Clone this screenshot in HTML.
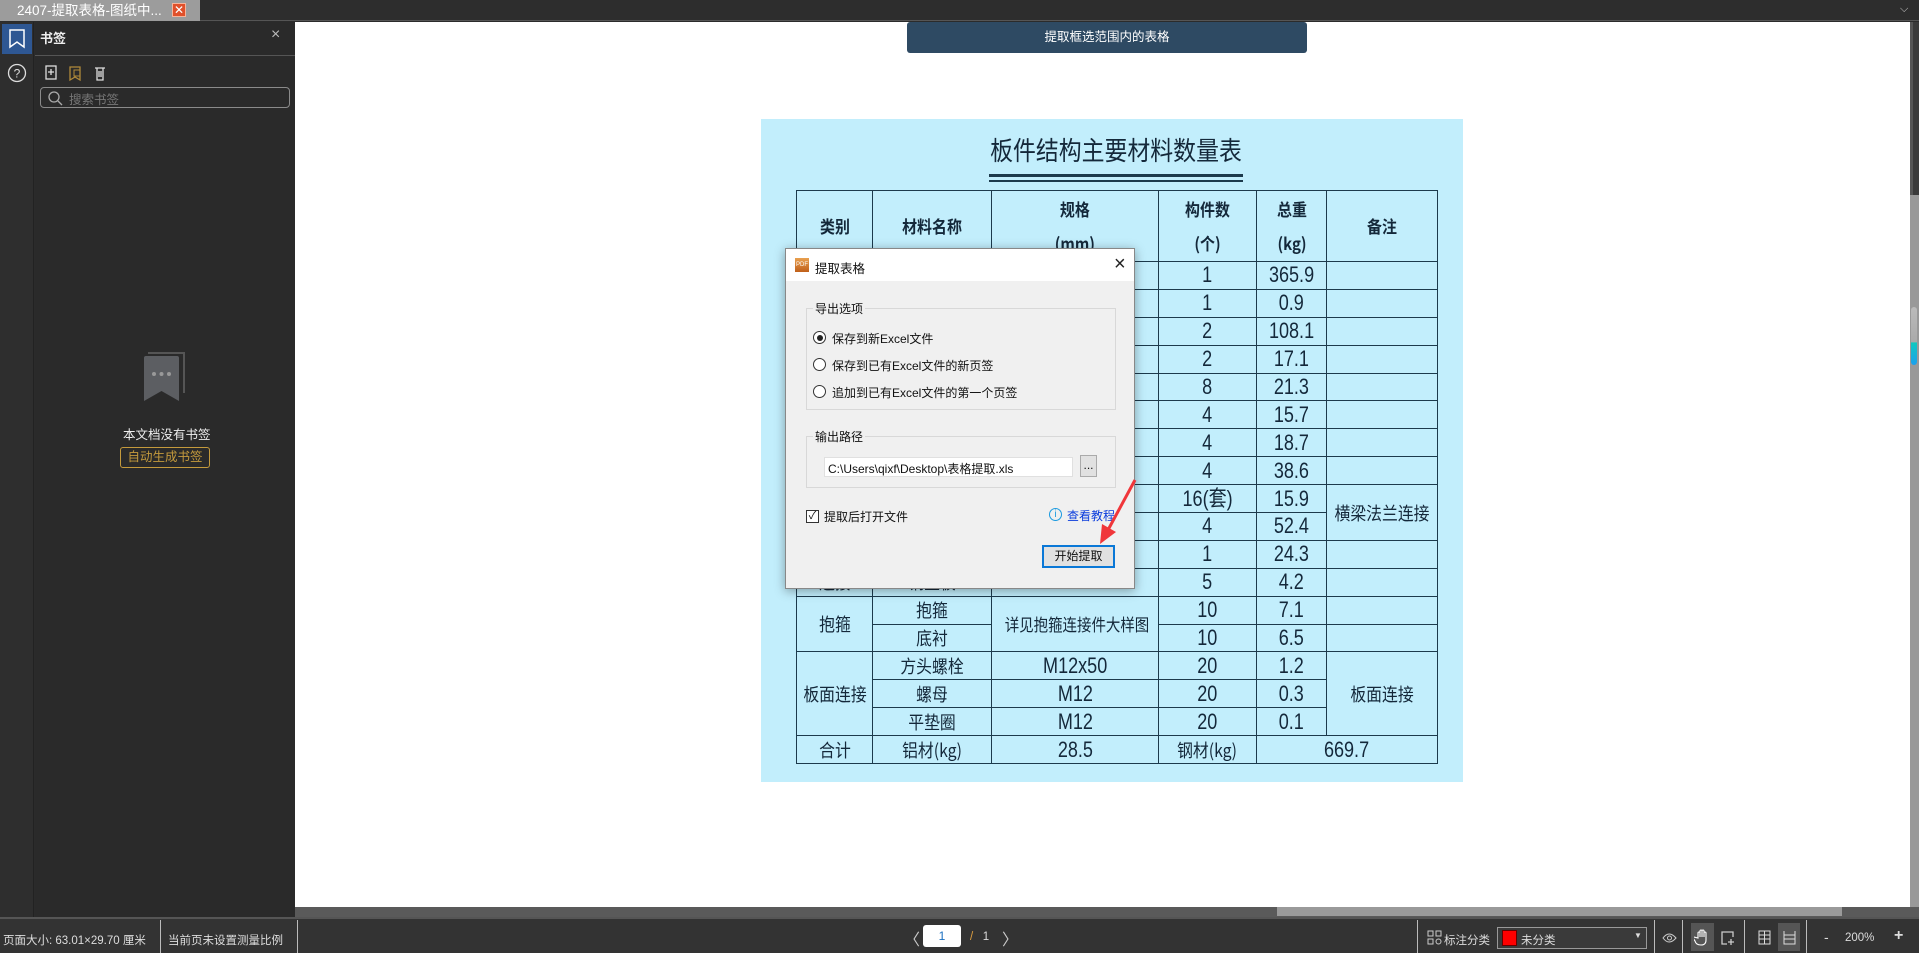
<!DOCTYPE html>
<html><head><meta charset="utf-8"><style>
*{margin:0;padding:0;box-sizing:border-box}
body{width:1919px;height:953px;overflow:hidden;background:#2b2b2b;font-family:"Liberation Sans","Noto Sans CJK SC",sans-serif;position:relative}
.a{position:absolute}
#tbl{position:absolute;left:796px;top:190px;width:641px;border-collapse:collapse;table-layout:fixed;font-family:"Noto Sans CJK SC",sans-serif;color:#14283a}
#tbl td{border:1.6px solid #1c3a4c;text-align:center;vertical-align:middle;height:27.9px;padding:0;font-size:18px;line-height:20px;overflow:hidden;white-space:nowrap}
#tbl td span{display:inline-block;transform:scaleX(.88)}
#tbl td.n{font-family:"Liberation Sans Narrow","Liberation Sans",sans-serif;font-size:22px}
#tbl td.n span{transform:scaleX(.82)}
#tbl tr.h td{height:71px;font-size:17px;font-weight:bold;line-height:34px}
.dlg{font-family:"Liberation Sans","Noto Sans CJK SC",sans-serif;font-size:12px;color:#111}
.st{color:#ddd;font-size:11.5px;top:932px;font-family:"Liberation Sans","Noto Sans CJK SC",sans-serif}
.sep{top:920px;width:1px;height:33px;background:#bbb}
.radio{width:13px;height:13px;border:1px solid #333;border-radius:50%;background:#fff}
</style></head><body>
<div class="a" style="left:0;top:0;width:1919px;height:21px;background:#2d2d2d;border-bottom:1px solid #555"></div>
<div class="a" style="left:0;top:0;width:200px;height:21px;background:#9c9c9c;color:#fff;font-size:13.5px;line-height:21px;padding-left:17px">2407-提取表格-图纸中...</div>
<div class="a" style="left:172px;top:3px;width:14px;height:14px;background:#e0502a;border:1px solid #f7b49a;color:#fff;font-size:12px;line-height:12px;text-align:center">✕</div>
<div class="a" style="left:1900px;top:3px;color:#ccc;font-size:11px">⌵</div>
<div class="a" style="left:0;top:22px;width:34px;height:895px;background:#2e2e2e;border-right:1px solid #222"></div>
<div class="a" style="left:2px;top:24px;width:30px;height:30px;background:#2e5793"></div>
<svg class="a" style="left:8px;top:29px" width="18" height="20"><path d="M2 1h14v17l-7-5-7 5z" fill="none" stroke="#fff" stroke-width="1.5"/></svg>
<svg class="a" style="left:7px;top:63px" width="20" height="20"><circle cx="10" cy="10" r="8.5" fill="none" stroke="#ddd" stroke-width="1.3"/><text x="10" y="14.5" font-size="12" fill="#ddd" text-anchor="middle" font-family="Liberation Sans">?</text></svg>
<div class="a" style="left:35px;top:22px;width:260px;height:895px;background:#2a2a2a"></div>
<div class="a" style="left:40px;top:28px;color:#eee;font-size:13px;font-weight:bold">书签</div>
<div class="a" style="left:271px;top:26px;color:#bbb;font-size:16px">×</div>
<div class="a" style="left:35px;top:55px;width:260px;height:1px;background:#555"></div>
<svg class="a" style="left:44px;top:64px" width="70" height="18"><rect x="2" y="2" width="10" height="13" fill="none" stroke="#ddd" stroke-width="1.3"/><path d="M7 5v6M4 8h6" stroke="#ddd" stroke-width="1.3"/><path d="M26 3h10v13l-5-3-5 3z" fill="none" stroke="#b08a3a" stroke-width="1.3"/><rect x="30" y="6" width="6" height="6" fill="none" stroke="#b08a3a"/><path d="M51 4h10M53 4v12h6v-12M55 7v6M57 7v6" fill="none" stroke="#ddd" stroke-width="1.3"/></svg>
<div class="a" style="left:40px;top:87px;width:250px;height:21px;border:1px solid #8a8a8a;border-radius:4px"></div>
<svg class="a" style="left:47px;top:90px" width="16" height="16"><circle cx="7" cy="7" r="5" fill="none" stroke="#aaa" stroke-width="1.3"/><path d="M11 11l4 4" stroke="#aaa" stroke-width="1.3"/></svg>
<div class="a" style="left:69px;top:89px;color:#777;font-size:12.5px">搜索书签</div>
<svg class="a" style="left:142px;top:352px" width="45" height="50"><path d="M6 1h36v40" fill="none" stroke="#555" stroke-width="2"/><path d="M2 6q0-2 2-2h31q2 0 2 2v43l-17.5-10-17.5 10z" fill="#5c5e62"/><circle cx="12" cy="22" r="2" fill="#999"/><circle cx="19.5" cy="22" r="2" fill="#999"/><circle cx="27" cy="22" r="2" fill="#999"/></svg>
<div class="a" style="left:123px;top:424px;color:#eee;font-size:12.5px">本文档没有书签</div>
<div class="a" style="left:120px;top:447px;width:90px;height:21px;border:1px solid #c49a3c;border-radius:3px;color:#c49a3c;font-size:12.5px;text-align:center;line-height:19px">自动生成书签</div>
<div class="a" style="left:295px;top:22px;width:1615px;height:885px;background:#fff"></div>
<div class="a" style="left:1910px;top:22px;width:9px;height:173px;background:#3a3a3a;border-left:3px solid #555"></div>
<div class="a" style="left:1910px;top:195px;width:9px;height:712px;background:#999"></div>
<div class="a" style="left:1911px;top:307px;width:6px;height:58px;border-radius:3px;background:linear-gradient(#bbb 0,#aaa 60%,#10c8c0 62%,#1aa0ee 100%)"></div>
<div class="a" style="left:295px;top:907px;width:1624px;height:10px;background:#5a5a5a"></div>
<div class="a" style="left:1277px;top:907px;width:565px;height:9px;background:#9a9a9a"></div>
<div class="a" style="left:907px;top:22px;width:400px;height:31px;background:#2e4a63;border-radius:3px;color:#fff;font-size:12.5px;text-align:center;line-height:31px">提取框选范围内的表格</div>
<div class="a" style="left:761px;top:119px;width:702px;height:663px;background:#c2eefc"></div>
<div class="a" style="left:940px;top:133px;width:352px;text-align:center;white-space:nowrap;font-family:'Noto Sans CJK SC',sans-serif;font-size:26px;line-height:34px;color:#14283a;transform:scaleX(.88)">板件结构主要材料数量表</div>
<div class="a" style="left:989px;top:174px;width:254px;height:2.5px;background:#1c3a4c"></div>
<div class="a" style="left:989px;top:180px;width:254px;height:1.5px;background:#1c3a4c"></div>
<table id="tbl">
<colgroup><col style="width:76px"><col style="width:119px"><col style="width:167px"><col style="width:98px"><col style="width:70px"><col style="width:111px"></colgroup>
<tr class="h"><td><span>类别</span></td><td><span>材料名称</span></td><td><span>规格<br>(mm)</span></td><td><span>构件数<br>(个)</span></td><td><span>总重<br>(kg)</span></td><td><span>备注</span></td></tr>
<tr><td></td><td></td><td></td><td class="n"><span>1</span></td><td class="n"><span>365.9</span></td><td></td></tr>
<tr><td></td><td></td><td></td><td class="n"><span>1</span></td><td class="n"><span>0.9</span></td><td></td></tr>
<tr><td></td><td></td><td></td><td class="n"><span>2</span></td><td class="n"><span>108.1</span></td><td></td></tr>
<tr><td></td><td></td><td></td><td class="n"><span>2</span></td><td class="n"><span>17.1</span></td><td></td></tr>
<tr><td></td><td></td><td></td><td class="n"><span>8</span></td><td class="n"><span>21.3</span></td><td></td></tr>
<tr><td></td><td></td><td></td><td class="n"><span>4</span></td><td class="n"><span>15.7</span></td><td></td></tr>
<tr><td></td><td></td><td></td><td class="n"><span>4</span></td><td class="n"><span>18.7</span></td><td></td></tr>
<tr><td></td><td></td><td></td><td class="n"><span>4</span></td><td class="n"><span>38.6</span></td><td></td></tr>
<tr><td></td><td></td><td></td><td class="n"><span>16(套)</span></td><td class="n"><span>15.9</span></td><td rowspan="2"><span>横梁法兰连接</span></td></tr>
<tr><td></td><td></td><td></td><td class="n"><span>4</span></td><td class="n"><span>52.4</span></td></tr>
<tr><td></td><td></td><td></td><td class="n"><span>1</span></td><td class="n"><span>24.3</span></td><td></td></tr>
<tr><td><span>连接</span></td><td><span>钢垫板</span></td><td class="n"><span>-10×100×150</span></td><td class="n"><span>5</span></td><td class="n"><span>4.2</span></td><td></td></tr>
<tr><td rowspan="2"><span>抱箍</span></td><td><span>抱箍</span></td><td rowspan="2" style="font-size:17px"><span style="transform:scaleX(.85)">详见抱箍连接件大样图</span></td><td class="n"><span>10</span></td><td class="n"><span>7.1</span></td><td></td></tr>
<tr><td><span>底衬</span></td><td class="n"><span>10</span></td><td class="n"><span>6.5</span></td><td></td></tr>
<tr><td rowspan="3"><span>板面连接</span></td><td><span>方头螺栓</span></td><td class="n"><span>M12x50</span></td><td class="n"><span>20</span></td><td class="n"><span>1.2</span></td><td rowspan="3"><span>板面连接</span></td></tr>
<tr><td><span>螺母</span></td><td class="n"><span>M12</span></td><td class="n"><span>20</span></td><td class="n"><span>0.3</span></td></tr>
<tr><td><span>平垫圈</span></td><td class="n"><span>M12</span></td><td class="n"><span>20</span></td><td class="n"><span>0.1</span></td></tr>
<tr><td><span>合计</span></td><td><span>铝材(kg)</span></td><td class="n"><span>28.5</span></td><td><span>钢材(kg)</span></td><td class="n" colspan="2"><span>669.7</span></td></tr>
</table>
<div class="a dlg" style="left:785px;top:248px;width:350px;height:341px;background:#f0f0f0;border:1px solid #888;box-shadow:0 2px 10px rgba(0,0,0,.35)">
 <div class="a" style="left:0;top:0;width:348px;height:32px;background:#fff"></div>
 <div class="a" style="left:9px;top:9px;width:14px;height:14px;background:linear-gradient(#e8a050,#c0601a);color:#fff;font-size:6px;line-height:14px;text-align:center">PDF</div>
 <div class="a" style="left:29px;top:9px;font-size:12.5px">提取表格</div>
 <div class="a" style="left:328px;top:4px;font-size:20px;font-weight:300;color:#222">×</div>
 <div class="a" style="left:20px;top:59px;width:310px;height:102px;border:1px solid #d8d8d8"></div>
 <div class="a" style="left:27px;top:51px;background:#f0f0f0;padding:0 2px">导出选项</div>
 <div class="a radio" style="left:27px;top:82px"></div><div class="a" style="left:30.5px;top:85.5px;width:6px;height:6px;border-radius:50%;background:#222"></div>
 <div class="a" style="left:46px;top:81px">保存到新Excel文件</div>
 <div class="a radio" style="left:27px;top:109px"></div><div class="a" style="left:46px;top:108px">保存到已有Excel文件的新页签</div>
 <div class="a radio" style="left:27px;top:136px"></div><div class="a" style="left:46px;top:135px">追加到已有Excel文件的第一个页签</div>
 <div class="a" style="left:20px;top:187px;width:310px;height:52px;border:1px solid #d8d8d8"></div>
 <div class="a" style="left:27px;top:179px;background:#f0f0f0;padding:0 2px">输出路径</div>
 <div class="a" style="left:38px;top:208px;width:249px;height:20px;background:#fff;border:1px solid #e0e0e0;padding:2px 3px">C:\Users\qixf\Desktop\表格提取.xls</div>
 <div class="a" style="left:294px;top:206px;width:17px;height:22px;background:#e1e1e1;border:1px solid #aaa;text-align:center;line-height:18px">...</div>
 <div class="a" style="left:20px;top:261px;width:13px;height:13px;border:1px solid #333;background:#fff;font-size:11px;line-height:11px;text-align:center">✓</div>
 <div class="a" style="left:38px;top:259px">提取后打开文件</div>
 <div class="a" style="left:263px;top:259px;width:13px;height:13px;border:1px solid #1a9ae0;border-radius:50%;color:#1a9ae0;font-size:10px;line-height:11px;text-align:center">i</div>
 <div class="a" style="left:281px;top:258px;color:#0a3cdc">查看教程</div>
 <div class="a" style="left:256px;top:296px;width:73px;height:23px;border:2px solid #0a78d7;background:#e1e1e1;text-align:center;line-height:19px">开始提取</div>
</div>
<svg class="a" style="left:1095px;top:478px" width="45" height="68"><path d="M40 2L13 52" stroke="#f0363a" stroke-width="3"/><path d="M5 66l2-20 14 8z" fill="#f0363a"/></svg>
<div class="a" style="left:0;top:917px;width:1919px;height:36px;background:#333;border-top:2px solid #555"></div>
<div class="a st" style="left:3px">页面大小: 63.01×29.70 厘米</div>
<div class="a sep" style="left:160px"></div>
<div class="a st" style="left:168px">当前页未设置测量比例</div>
<div class="a sep" style="left:297px"></div>
<div class="a st" style="left:904px;top:926px;font-size:16px;color:#ccc">〈</div>
<div class="a" style="left:923px;top:925px;width:38px;height:22px;background:#fff;border-radius:3px;color:#1a6fc0;font-size:12px;text-align:center;line-height:22px">1</div>
<div class="a st" style="left:970px;top:931px"><span style="color:#e0a040">/</span>&nbsp;&nbsp;&nbsp;<span>1</span></div>
<div class="a st" style="left:1002px;top:926px;font-size:16px;color:#ccc">〉</div>
<div class="a sep" style="left:1417px"></div>
<svg class="a" style="left:1427px;top:930px" width="15" height="15"><g fill="none" stroke="#ccc"><rect x="1" y="1" width="5" height="5"/><rect x="9" y="1" width="5" height="5"/><rect x="1" y="9" width="5" height="5"/><circle cx="11.5" cy="11.5" r="2.5"/></g></svg>
<div class="a st" style="left:1444px">标注分类</div>
<div class="a" style="left:1497px;top:927px;width:150px;height:22px;border:1px solid #999;background:#3a3a3a"></div>
<div class="a" style="left:1502px;top:930px;width:15px;height:16px;background:#f00;border:1px solid #600"></div>
<div class="a st" style="left:1521px">未分类</div>
<div class="a st" style="left:1634px;top:931px;font-size:8px">▼</div>
<div class="a sep" style="left:1654px"></div>
<svg class="a" style="left:1662px;top:932px" width="15" height="12"><path d="M1 6q6-8 13 0q-7 8-13 0z" fill="none" stroke="#ccc"/><circle cx="7.5" cy="6" r="2" fill="none" stroke="#ccc"/></svg>
<div class="a sep" style="left:1682px"></div>
<div class="a" style="left:1691px;top:923px;width:23px;height:28px;background:#555"></div>
<svg class="a" style="left:1694px;top:929px" width="17" height="17"><path d="M4 9V4q0-1 1-1t1 1v4V2q0-1 1-1t1 1v6V2q0-1 1-1t1 1v6V4q0-1 1-1t1 1v7q0 5-5 5t-6-4l-2-3q0-1 1-1z" fill="none" stroke="#fff" stroke-width="1.1"/></svg>
<svg class="a" style="left:1720px;top:930px" width="15" height="16"><path d="M7 14H2V2h11v5" fill="none" stroke="#ccc" stroke-width="1.3"/><path d="M11 9v6M8 12h6" stroke="#ccc" stroke-width="1.3"/></svg>
<div class="a sep" style="left:1744px"></div>
<svg class="a" style="left:1758px;top:930px" width="13" height="15"><g fill="none" stroke="#ddd"><rect x="1" y="1" width="11" height="13"/><path d="M6.5 1v13M1 5h11M1 9h11"/></g></svg>
<div class="a" style="left:1778px;top:923px;width:22px;height:28px;background:#555"></div>
<svg class="a" style="left:1783px;top:930px" width="13" height="15"><g fill="none" stroke="#ddd"><path d="M1 1v13h11V1M1 5h11M1 9h11"/></g></svg>
<div class="a sep" style="left:1806px"></div>
<div class="a st" style="left:1824px;font-size:14px;top:929px">-</div>
<div class="a st" style="left:1845px">200%</div>
<div class="a st" style="left:1894px;font-size:16px;top:927px;font-weight:bold">+</div>
</body></html>
